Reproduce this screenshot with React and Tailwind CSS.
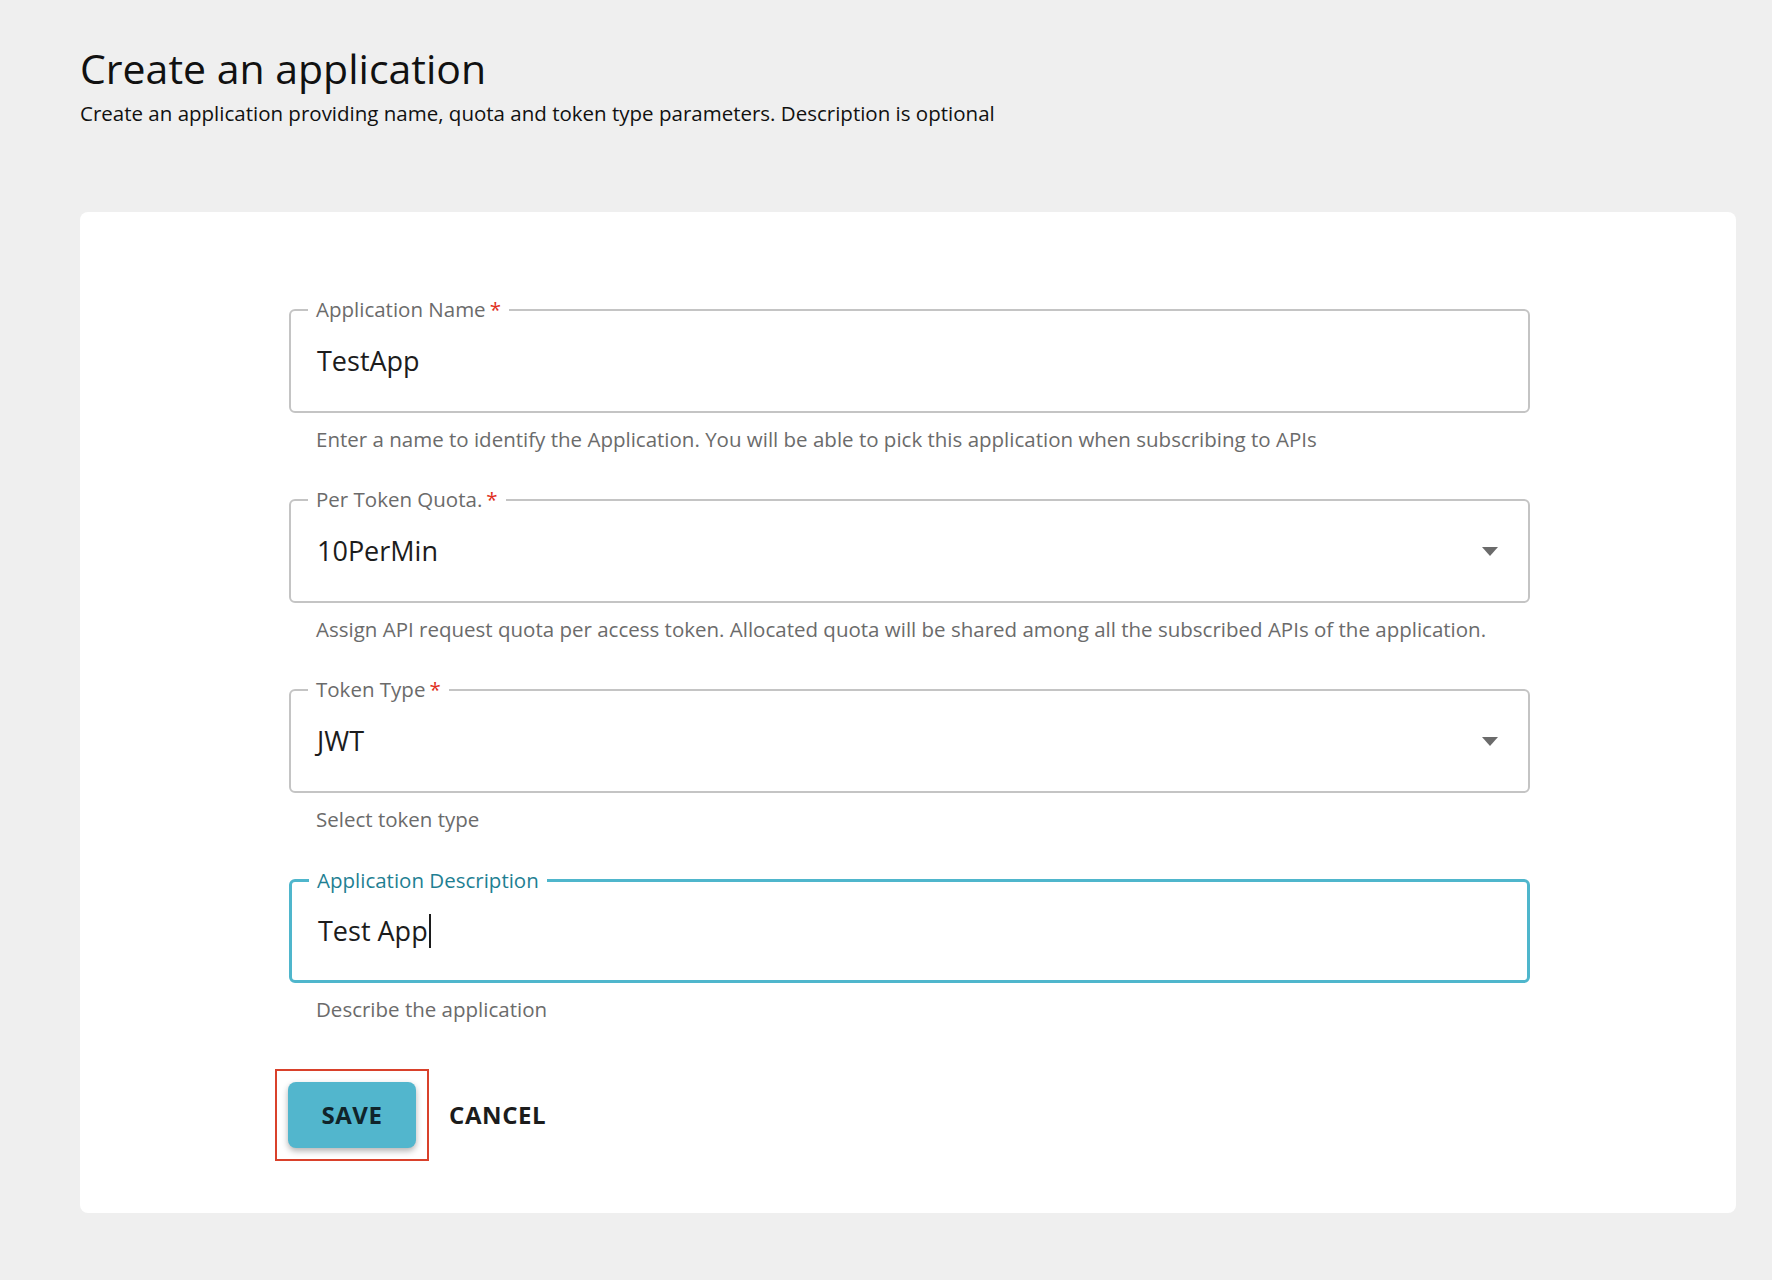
const font = { fontFamily: '"Open Sans", "Noto Sans", sans-serif' }

const Field = ({ label, value, helper, required, select, focused, caret }) => (
  <div className="mb-[46px]">
    <div
      className={`relative h-[104px] rounded-[6px] flex items-center pl-[26px] pr-[30px] ${
        focused ? 'border-[3px] border-[#4fb6cc]' : 'border-2 border-[#c4c4c4]'
      }`}
    >
      <span
        className={`absolute -top-[15px] left-[17px] bg-white px-[8px] text-[20.5px] leading-[26px] ${
          focused ? 'text-[#1f7f93]' : 'text-[#6b6b6b]'
        }`}
      >
        {label}
        {required && <span className="text-[#e0301e] ml-[4px]">*</span>}
      </span>
      <span className="text-[27px] text-[#1c1c1c] flex-1 flex items-center">
        {value}
        {caret && <span className="inline-block w-[2px] h-[34px] bg-[#1c1c1c] ml-[1px]" />}
      </span>
      {select && (
        <svg width="16" height="9" viewBox="0 0 16 9">
          <path d="M0 0h16L8 9z" fill="#6b6b6b" />
        </svg>
      )}
    </div>
    <p className="mt-[12px] pl-[27px] text-[20.5px] leading-[28px] text-[#6b6b6b]">{helper}</p>
  </div>
)

export default function App() {
  return (
    <div className="min-h-screen bg-[#efefef] pl-[80px] pr-[36px] pt-[40px] pb-[46px]" style={font}>
      <h1 className="text-[41px] leading-[56px] text-[#111]">Create an application</h1>
      <p className="text-[20.5px] leading-[28px] text-[#111] mt-[3px]">
        Create an application providing name, quota and token type parameters. Description is optional
      </p>
      <div className="mt-[85px] bg-white rounded-[8px] pt-[97px] pb-[52px] pl-[209px] pr-[206px]">
        <Field
          label="Application Name"
          required
          value="TestApp"
          helper="Enter a name to identify the Application. You will be able to pick this application when subscribing to APIs"
        />
        <Field
          label="Per Token Quota."
          required
          select
          value="10PerMin"
          helper="Assign API request quota per access token. Allocated quota will be shared among all the subscribed APIs of the application."
        />
        <Field label="Token Type" required select value="JWT" helper="Select token type" />
        <Field
          label="Application Description"
          focused
          caret
          value="Test App"
          helper="Describe the application"
        />
        <div className="flex items-center mt-[22px] -ml-[14px]">
          <div className="border-2 border-[#d9412b] p-[11px]">
            <button className="w-[128px] h-[66px] rounded-[8px] bg-[#52b6cd] shadow-[0_3px_6px_rgba(0,0,0,0.3)] text-[24px] font-bold text-[#10242a] tracking-wide">
              SAVE
            </button>
          </div>
          <button className="ml-[20px] text-[24px] font-bold text-[#1c1c1c] tracking-wide">CANCEL</button>
        </div>
      </div>
    </div>
  )
}
